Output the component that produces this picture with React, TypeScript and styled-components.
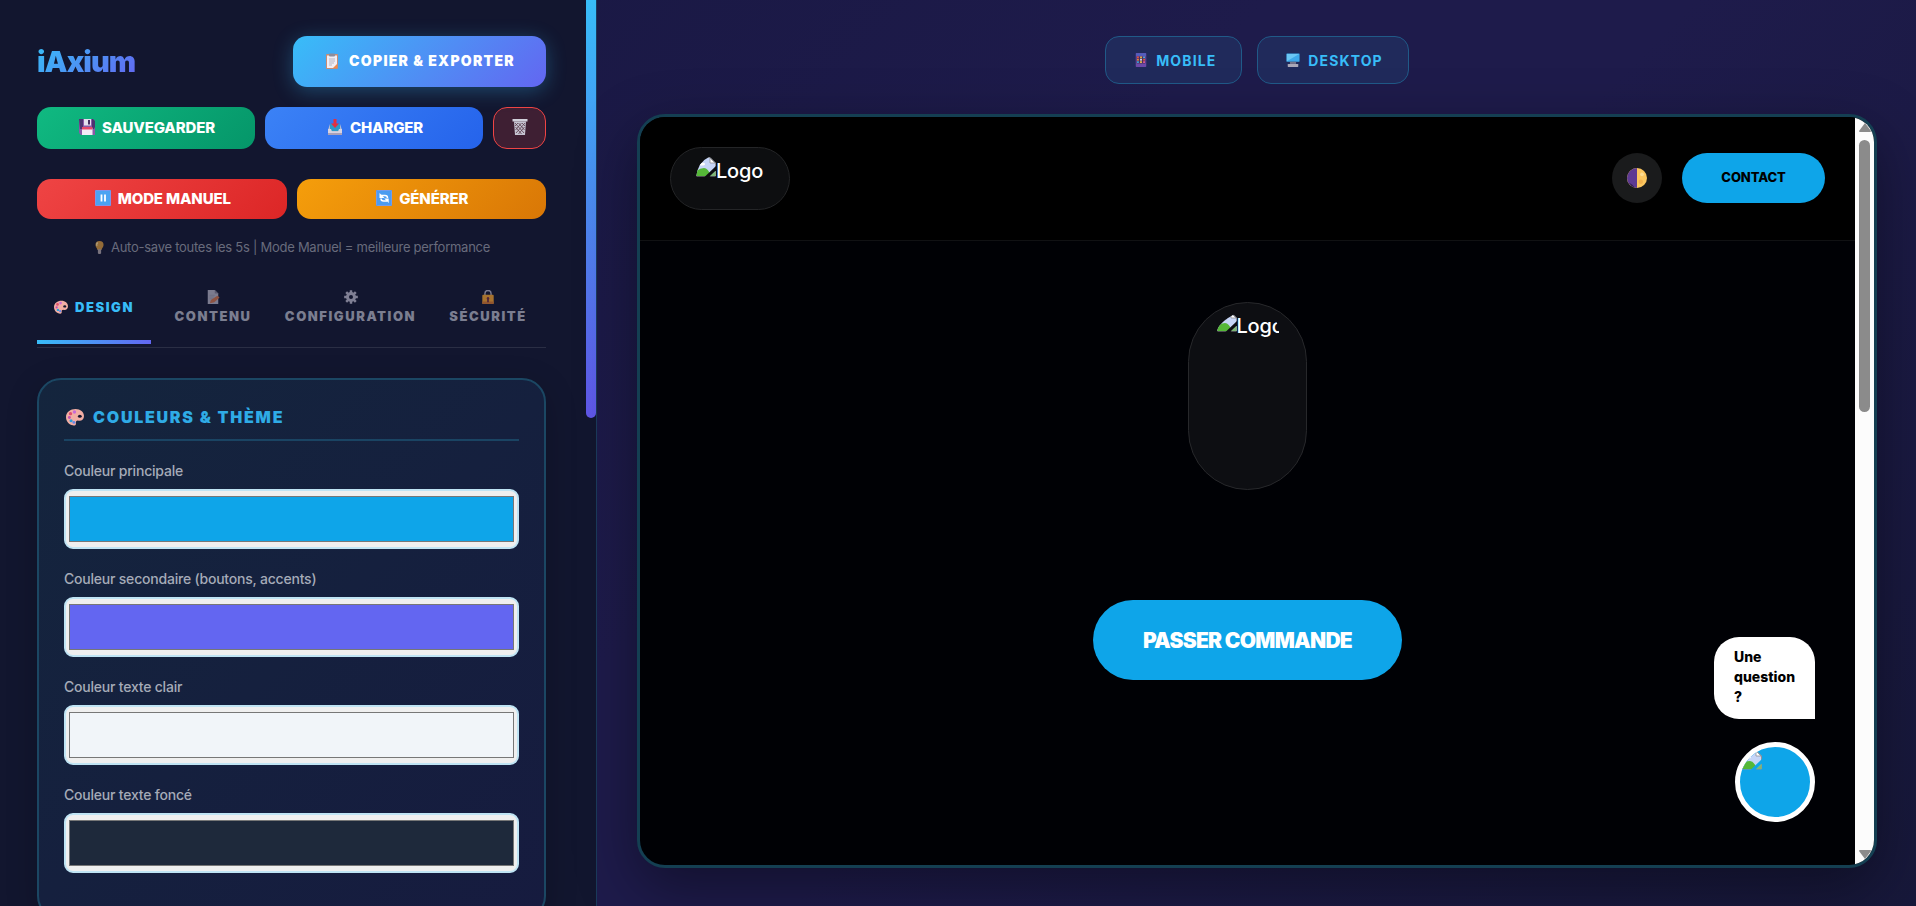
import React from 'react';
import styled, { createGlobalStyle } from 'styled-components';

const Global = createGlobalStyle`
  *, *::before, *::after { box-sizing: border-box; }
  body {
    margin: 0;
    font-family: Inter, 'Liberation Sans', sans-serif;
    color: #f1f5f9;
    background: #0f172a;
  }
  button { font-family: inherit; cursor: pointer; border: 0; }
`;

const Shell = styled.div`
  display: flex;
  height: 100vh;
  min-height: 600px;
  overflow: hidden;
  background: linear-gradient(135deg, #171740 0%, #1e1b4b 45%, #1e1b4b 60%, #17183a 100%);
`;

const Sidebar = styled.aside`
  flex: 0 0 597px;
  display: flex;
  background: #12162f;
  border-right: 1px solid #1b3a5c;
  overflow: hidden;
`;

const SidebarContent = styled.div`
  flex: 1;
  min-width: 0;
  padding: 36px 40px 40px 37px;
`;

const SideScroll = styled.div`
  flex: 0 0 10px;
`;

const SideThumb = styled.div`
  height: 418px;
  border-radius: 0 0 5px 5px;
  background: linear-gradient(180deg, #38bdf8, #6056e8);
`;

const Brand = styled.h1`
  margin: 0;
  font-size: 29px;
  font-weight: 900;
  letter-spacing: -1px;
  line-height: 36px;
  background: linear-gradient(135deg, #38bdf8, #6366f1);
  background-clip: text;
  color: transparent;
`;

const Row = styled.div<{ $mb: number; $between?: boolean }>`
  display: flex;
  align-items: center;
  justify-content: ${p => (p.$between ? 'space-between' : 'flex-start')};
  gap: 10px;
  margin-bottom: ${p => p.$mb}px;
`;

const ExportButton = styled.button`
  display: flex;
  align-items: center;
  justify-content: center;
  gap: 9px;
  width: 253px;
  height: 51px;
  padding: 0 5px 2px;
  border-radius: 14px;
  color: #fff;
  font-size: 14px;
  font-weight: 900;
  letter-spacing: 0.09em;
  background: linear-gradient(135deg, #38bdf8, #6366f1);
  box-shadow: 0 4px 20px rgba(56, 189, 248, 0.3);
`;

const ActionButton = styled.button<{ $from: string; $to: string; $h: number }>`
  flex: 1 1 0;
  display: flex;
  align-items: center;
  justify-content: center;
  gap: 7px;
  height: ${p => p.$h}px;
  padding: 0 4px 2px 6px;
  border-radius: 14px;
  color: #fff;
  font-size: 15px;
  font-weight: 800;
  letter-spacing: -0.01em;
  background: linear-gradient(135deg, ${p => p.$from}, ${p => p.$to});
`;

const TrashButton = styled.button`
  flex: 0 0 53px;
  display: flex;
  align-items: center;
  justify-content: center;
  height: 42px;
  padding: 0 0 2px;
  border: 1px solid #ef4444;
  border-radius: 14px;
  background: rgba(239, 68, 68, 0.2);
`;

const Hint = styled.p`
  display: flex;
  align-items: center;
  justify-content: center;
  gap: 5px;
  margin: 0 0 12px;
  font-size: 13px;
  letter-spacing: -0.02em;
  line-height: 20px;
  color: #686b7c;
`;

const Tabs = styled.nav`
  display: grid;
  grid-template-columns: 114fr 116fr 151fr 116fr;
  gap: 4px;
  padding-bottom: 3px;
  margin-bottom: 30px;
  border-bottom: 1px solid #2a2e44;
`;

const Tab = styled.button<{ $active?: boolean }>`
  display: flex;
  flex-direction: ${p => (p.$active ? 'row' : 'column')};
  align-items: center;
  justify-content: center;
  gap: ${p => (p.$active ? 7 : 4)}px;
  height: 75px;
  padding: 4px 0 0;
  border-bottom: 4px solid transparent;
  background: none;
  color: ${p => (p.$active ? '#38bdf8' : '#7b7e90')};
  border-image: ${p => (p.$active ? 'linear-gradient(90deg, #38bdf8, #6366f1) 1' : 'none')};
  font-size: 13px;
  font-weight: 900;
  letter-spacing: 0.12em;
  line-height: 16px;
`;

const Card = styled.section`
  padding: 25px;
  border: 2px solid #1b4763;
  border-radius: 24px;
  background: linear-gradient(135deg, #14253d, #161b3f);
  box-shadow: 0 8px 32px rgba(0, 0, 0, 0.2);
`;

const CardTitle = styled.h2`
  display: flex;
  align-items: center;
  gap: 9px;
  margin: 0 0 20px;
  padding: 0 0 10px 2px;
  border-bottom: 2px solid #1a4463;
  color: #2fabe6;
  font-size: 16px;
  font-weight: 900;
  letter-spacing: 0.11em;
  line-height: 24px;
`;

const Field = styled.div`
  display: flex;
  flex-direction: column;
  gap: 8px;
  padding-bottom: 20px;
`;

const FieldLabel = styled.label`
  color: #a5abb8;
  font-size: 14px;
  font-weight: 500;
  letter-spacing: -0.015em;
  line-height: 20px;
`;

const ColorInput = styled.input`
  width: 100%;
  height: 60px;
  padding: 1px;
  border: 2px solid #bfe4f4;
  border-radius: 9px;
  background: #efefef;
`;

const Stage = styled.main`
  flex: 1;
  min-width: 0;
  display: flex;
  flex-direction: column;
  gap: 30px;
  padding: 36px 39px 38px 40px;
`;

const DeviceBar = styled.div`
  display: flex;
  justify-content: center;
  gap: 15px;
`;

const DeviceButton = styled.button`
  display: flex;
  align-items: center;
  gap: 8px;
  height: 48px;
  padding: 0 25px 0 28px;
  border: 1px solid #205a88;
  border-radius: 14px;
  background: #202a5b;
  color: #38bdf8;
  font-size: 14px;
  font-weight: 700;
  letter-spacing: 0.08em;
`;

const Frame = styled.div`
  flex: 1;
  min-height: 0;
  display: flex;
  overflow: hidden;
  border: 3px solid #143f52;
  border-radius: 28px;
  background: #000105;
  box-shadow: 0 20px 60px rgba(0, 0, 0, 0.4);
`;

const Site = styled.div`
  position: relative;
  flex: 1;
  min-width: 0;
  display: flex;
  flex-direction: column;
`;

const SiteHeader = styled.header`
  display: flex;
  align-items: center;
  gap: 20px;
  height: 124px;
  padding: 0 30px 1px;
  border-bottom: 1px solid #101113;
  background: #000;
`;

const HeaderLogo = styled.div`
  display: flex;
  justify-content: center;
  width: 120px;
  height: 63px;
  margin-right: auto;
  padding-top: 9px;
  border: 1px solid #242527;
  border-radius: 32px;
  background: #0d0e10;
`;

const LogoImage = styled.span<{ $w: number; $r: number }>`
  display: flex;
  width: ${p => p.$w}px;
  height: 42px;
  overflow: hidden;
  border-radius: ${p => p.$r}px;
  font-size: 20px;
  font-weight: 500;
  letter-spacing: -0.01em;
  line-height: 28px;
  color: #fff;
  white-space: nowrap;
  svg { flex: none; }
`;

const ThemeToggle = styled.button`
  display: flex;
  align-items: center;
  justify-content: center;
  width: 50px;
  height: 50px;
  padding: 0;
  border-radius: 50%;
  background: #1a1b1c;
`;

const ContactButton = styled.button`
  width: 143px;
  height: 50px;
  padding: 0 0 3px;
  border-radius: 25px;
  background: #0ea5e9;
  color: #000;
  font-size: 13px;
  font-weight: 800;
  letter-spacing: -0.01em;
`;

const Hero = styled.section`
  display: flex;
  flex-direction: column;
  align-items: center;
  padding-top: 61px;
`;

const HeroLogo = styled.div`
  display: flex;
  justify-content: center;
  width: 119px;
  height: 188px;
  margin-bottom: 110px;
  padding-top: 9px;
  border: 1px solid #27282b;
  border-radius: 60px;
  background: #0d0e12;
`;

const OrderButton = styled.button`
  width: 309px;
  height: 80px;
  border-radius: 40px;
  background: #0ea5e9;
  color: #fff;
  font-size: 21px;
  font-weight: 900;
  letter-spacing: -0.035em;
`;

const ChatWidget = styled.div`
  position: absolute;
  right: 40px;
  bottom: 43px;
  display: flex;
  flex-direction: column;
  align-items: flex-end;
  gap: 23px;
`;

const ChatBubble = styled.div`
  width: 101px;
  height: 82px;
  padding: 10px 20px;
  border-radius: 25px 25px 0 25px;
  background: #fff;
  color: #000;
  font-size: 14px;
  font-weight: 800;
  line-height: 20px;
`;

const ChatButton = styled.button`
  display: flex;
  align-items: flex-start;
  width: 80px;
  height: 80px;
  padding: 3px 2px;
  overflow: hidden;
  border: 5px solid #fff;
  border-radius: 50%;
  background: #0ea5e9;
`;

const SiteScroll = styled.div`
  flex: 0 0 19px;
  display: flex;
  flex-direction: column;
  align-items: center;
  justify-content: space-between;
  padding: 6px 0;
  background: #fcfcfc;
  svg { display: block; flex: none; }
`;

const SiteThumb = styled.div`
  width: 11px;
  height: 272px;
  margin: 8px 0 auto;
  border-radius: 6px;
  background: #8b8b8b;
`;

type IconProps = { size?: number };

const Svg = ({ size = 16, dim, children }: { size?: number; dim?: number; children: React.ReactNode }) => (
  <svg width={size} height={size} viewBox="0 0 16 16" opacity={dim} aria-hidden="true">{children}</svg>
);

const Clipboard = () => (
  <Svg>
    <rect x="2" y="1" width="12" height="15" rx="1" fill="#c98b72" />
    <path d="M3 2.5h10V15H3z" fill="#f1eef5" />
    <path d="M9 15l4-4v4z" fill="#f08a4b" />
    <rect x="5" y="0.500" width="6" height="3" rx="1" fill="#8b8d9d" />
    <path d="M5 6h6M5 8h6M5 10h5M5 12h3" stroke="#a8a6b6" strokeWidth="0.8" />
  </Svg>
);

const Floppy = () => (
  <Svg>
    <path d="M0 0h14l2 2v14H2l-2-2z" fill="#8a5aa8" />
    <path d="M0 0h4v8h9V0h1l2 2v6l-1 2H1z" fill="#4b3470" />
    <rect x="5" y="0" width="7" height="6.500" fill="#e4e1ee" />
    <rect x="9" y="1" width="2" height="4.500" fill="#463063" />
    <rect x="3" y="9" width="10.500" height="7" fill="#f3ecf6" />
    <rect x="3" y="8" width="10.500" height="2.500" fill="#e5486a" />
  </Svg>
);

const Inbox = () => (
  <Svg>
    <path d="M3 5h10l2 6v5H1v-5z" fill="#b7bdd0" />
    <path d="M3 5h10v7H3z" fill="#2b9bc8" />
    <path d="M1 10h3l1 2.500h6L12 10h3v6H1z" fill="#d6d3e2" />
    <path d="M1 14h14v2H1z" fill="#a9a0b8" />
    <path d="M6.500 0h3v4.500H12L8 9 4 4.500h2.500z" fill="#e3303f" />
  </Svg>
);

const Trash = () => (
  <Svg>
    <path d="M0.500 0h15v2.500H.5z" fill="#d0cfda" />
    <path d="M2 2.500h12l-1 13.500H3z" fill="#c4c2d0" />
    <path d="M3 4l9 10M6.500 4l6 7M10 4l3 3M3.500 8l6 7M13 4L4 14M9.500 4L3.500 11M6 4L3 7M12.500 8l-6 7" stroke="#5b3b4b" strokeWidth="0.8" />
  </Svg>
);

const Pause = () => (
  <Svg>
    <rect width="16" height="16" rx="1" fill="#4ba3f2" />
    <rect x="0.500" y="0.500" width="15" height="15" rx="1" fill="none" stroke="#8d8fe8" strokeWidth="0.8" />
    <path d="M6.500 4.500v7M10 4.500v7" stroke="#fff" strokeWidth="1.800" />
  </Svg>
);

const Refresh = () => (
  <Svg>
    <rect width="16" height="16" rx="1" fill="#4b9cf0" />
    <rect x="0.500" y="0.500" width="15" height="15" rx="1" fill="none" stroke="#7f9ae8" strokeWidth="0.8" />
    <path d="M5 5.500h4a2.500 2.500 0 012.500 2.500M11 11H7.500A2.500 2.500 0 015 8.500" fill="none" stroke="#fff" strokeWidth="1.500" />
    <path d="M3.500 3v5h5L6.800 6.200 5.500 5zM12.700 13V8.500H8.200z" fill="#fff" />
  </Svg>
);

const Bulb = () => (
  <Svg size={13} dim={0.65}>
    <path d="M8 0a5 5 0 00-5 5c0 2.500 2 3.500 2.500 6h5C11 8.500 13 7.500 13 5a5 5 0 00-5-5z" fill="#d9993c" />
    <path d="M6 2a3 3 0 00-1 4" stroke="#ffe3a0" strokeWidth="1.500" fill="none" />
    <path d="M6 10h4v5l-1 1H7l-1-1z" fill="#b0a6a8" />
  </Svg>
);

const Palette = ({ size = 14 }: IconProps) => (
  <Svg size={size}>
    <path d="M8.500 0.800C4 .8 0 3.500 0 8c0 4 3 7 6 7.400 1.500.6 3 .2 2.800-1.600-.2-1.600.4-2.600 1.700-2.600 3 .8 5.500-.7 5.500-4C16 3.500 12.800.8 8.500.8z" fill="#f2aea4" />
    <ellipse cx="12.300" cy="7.300" rx="1.700" ry="1.400" fill="#12162f" />
    <circle cx="7.500" cy="3.500" r="1.500" fill="#c86ad8" />
    <circle cx="4" cy="5" r="1.500" fill="#e0506c" />
    <circle cx="3" cy="8.500" r="1.300" fill="#c44fb0" />
    <circle cx="4.500" cy="11.300" r="1.400" fill="#2f9fd8" />
    <circle cx="7" cy="12.800" r="1.300" fill="#6a8ae8" />
  </Svg>
);

const Memo = () => (
  <Svg size={14} dim={0.6}>
    <path d="M2 0h8l4 4v12H2z" fill="#c2bfd0" />
    <path d="M10 0v4h4z" fill="#8b889c" />
    <path d="M4 6h6M4 8h5M4 10h4" stroke="#a3a0b4" strokeWidth="0.8" />
    <path d="M13 6.500l2.500 2L9.500 14l-5 1 1-3.500z" fill="#e07a4e" />
  </Svg>
);

const Gear = () => (
  <Svg size={14} dim={0.75}>
    <circle cx="8" cy="8" r="4" fill="none" stroke="#a4a2b6" strokeWidth="3.400" />
    <g stroke="#a4a2b6" strokeWidth="2.800">
      <path d="M8 .2V4M8 12v3.800M.2 8H4M12 8h3.800M2.500 2.500l2.600 2.600M10.900 10.900l2.600 2.600M13.500 2.500l-2.600 2.600M5.100 10.900l-2.600 2.600" />
    </g>
  </Svg>
);

const Lock = () => (
  <Svg size={14} dim={0.7}>
    <path d="M4.500 7V4a3.500 3.500 0 017 0v3" fill="none" stroke="#aaa6b8" strokeWidth="1.600" />
    <rect x="1.500" y="5.500" width="13" height="10.500" rx="1" fill="#e69a2e" />
    <path d="M1.500 13h13v2l-1 1h-11l-1-1z" fill="#c9722f" />
    <path d="M8 8a1.600 1.600 0 011 2.800V14H7v-3.200A1.600 1.600 0 018 8z" fill="#6a2a3c" />
  </Svg>
);

const Phone = () => (
  <Svg size={14}>
    <rect x="2" y="0" width="12" height="16" rx="0.800" fill="#6c4aa8" />
    <rect x="2.500" y="0.500" width="11" height="2.500" fill="#4c62c0" />
    <rect x="3" y="4" width="10" height="8" fill="#46305f" />
    {[4, 6.7, 9.4].map((y, i) => (
      <g key={y}>
        <rect x="3.500" y={y} width="2" height="2" fill={['#ec5340', '#f28a3d', '#36a9e0'][i]} />
        <rect x="7" y={y} width="2" height="2" fill={['#f2b93d', '#e8e4f0', '#f2c84c'][i]} />
        <rect x="10.500" y={y} width="2" height="2" fill={['#47b3ec', '#ec5340', '#e85a9a'][i]} />
      </g>
    ))}
  </Svg>
);

const Monitor = () => (
  <Svg size={14}>
    <rect x="0.500" y="0.500" width="15" height="9.500" rx="0.500" fill="#3ea9ea" />
    <path d="M1 1h14L1 9.500z" fill="#6ac6f4" />
    <path d="M4.500 10h7v2.500h-7z" fill="#74748a" />
    <rect x="2" y="12.500" width="12" height="3.500" rx="0.500" fill="#aaa8b8" />
  </Svg>
);

const HalfMoon = () => (
  <Svg size={20}>
    <circle cx="8" cy="8" r="8" fill="#fbc65f" />
    <path d="M8 0a8 8 0 000 16z" fill="#5d3a93" />
    <path d="M1.500 11.500l3 2 1.500 2A8 8 0 011.500 11.500z" fill="#33204f" />
    <circle cx="12" cy="5" r="1.500" fill="#fddc92" />
    <circle cx="11" cy="11" r="1.800" fill="#f3b24e" />
  </Svg>
);

const CUTS = {
  header: 'M0 20Q2 5 13 0h7v20z',
  hero: 'M0 20V18Q4 9 18 2h2v18z',
  chat: 'M0 20V12Q4 4 12 0h8v20z',
};

const BrokenImage = ({ cut, back }: { cut: keyof typeof CUTS; back: string }) => (
  <svg width="20" height="20" viewBox="0 0 20 20" aria-hidden="true">
    <defs><clipPath id={`cut-${cut}`}><path d={CUTS[cut]} /></clipPath></defs>
    <g clipPath={`url(#cut-${cut})`}>
      <path d="M.5 0.500H14L19.500 6v13H.5z" fill="#c6d5f7" stroke="#8f9096" strokeWidth="1" />
      <path d="M14 1v5h5z" fill="#fff" stroke="#8f9096" strokeWidth="0.8" />
      <ellipse cx="6" cy="7" rx="3" ry="1.600" fill="#fff" />
      <path d="M.5 19v-5Q4 11 8 11q4 0 7 8z" fill="#55b838" />
      <path d="M8.500 20L20 9v4.500L13.500 20z" fill={back} />
      <path d="M14 19l5.500-5v5z" fill="#7eb874" />
    </g>
  </svg>
);

const FIELDS = [
  { id: 'primary', label: 'Couleur principale', value: '#0ea5e9' },
  { id: 'secondary', label: 'Couleur secondaire (boutons, accents)', value: '#6366f1' },
  { id: 'light', label: 'Couleur texte clair', value: '#f1f5f9' },
  { id: 'dark', label: 'Couleur texte foncé', value: '#1e293b' },
];

export default function App() {
  return (
    <>
      <Global />
      <Shell>
        <Sidebar>
          <SidebarContent>
            <Row $mb={20} $between>
              <Brand>iAxium</Brand>
              <ExportButton><Clipboard />COPIER &amp; EXPORTER</ExportButton>
            </Row>
            <Row $mb={30}>
              <ActionButton $h={42} $from="#10b981" $to="#059669"><Floppy />SAUVEGARDER</ActionButton>
              <ActionButton $h={42} $from="#3b82f6" $to="#2563eb"><Inbox />CHARGER</ActionButton>
              <TrashButton aria-label="Supprimer"><Trash /></TrashButton>
            </Row>
            <Row $mb={18}>
              <ActionButton $h={40} $from="#ef4444" $to="#dc2626"><Pause />MODE MANUEL</ActionButton>
              <ActionButton $h={40} $from="#f59e0b" $to="#d97706"><Refresh />GÉNÉRER</ActionButton>
            </Row>
            <Hint><Bulb />Auto-save toutes les 5s | Mode Manuel = meilleure performance</Hint>
            <Tabs>
              <Tab $active><Palette />DESIGN</Tab>
              <Tab><Memo />CONTENU</Tab>
              <Tab><Gear />CONFIGURATION</Tab>
              <Tab><Lock />SÉCURITÉ</Tab>
            </Tabs>
            <Card>
              <CardTitle><Palette size={18} />COULEURS &amp; THÈME</CardTitle>
              {FIELDS.map(f => (
                <Field key={f.id}>
                  <FieldLabel htmlFor={f.id}>{f.label}</FieldLabel>
                  <ColorInput id={f.id} type="color" defaultValue={f.value} />
                </Field>
              ))}
            </Card>
          </SidebarContent>
          <SideScroll><SideThumb /></SideScroll>
        </Sidebar>
        <Stage>
          <DeviceBar>
            <DeviceButton><Phone />MOBILE</DeviceButton>
            <DeviceButton><Monitor />DESKTOP</DeviceButton>
          </DeviceBar>
          <Frame>
            <Site>
              <SiteHeader>
                <HeaderLogo><LogoImage $w={68} $r={0}><BrokenImage cut="header" back="#0d0e10" />Logo</LogoImage></HeaderLogo>
                <ThemeToggle aria-label="Changer de thème"><HalfMoon /></ThemeToggle>
                <ContactButton>CONTACT</ContactButton>
              </SiteHeader>
              <Hero>
                <HeroLogo><LogoImage $w={62} $r={20}><BrokenImage cut="hero" back="#0d0e12" />Logo</LogoImage></HeroLogo>
                <OrderButton>PASSER COMMANDE</OrderButton>
              </Hero>
              <ChatWidget>
                <ChatBubble>Une question ?</ChatBubble>
                <ChatButton aria-label="Ouvrir le chat"><BrokenImage cut="chat" back="#0ea5e9" /></ChatButton>
              </ChatWidget>
            </Site>
            <SiteScroll>
              <svg width="14" height="9" viewBox="0 0 14 9"><path d="M7 0l6 8q0 1-1 1H2q-1 0-1-1z" fill="#8b8b8b" /></svg>
              <SiteThumb />
              <svg width="14" height="9" viewBox="0 0 14 9"><path d="M7 9l6-8q0-1-1-1H2Q1 0 1 1z" fill="#8b8b8b" /></svg>
            </SiteScroll>
          </Frame>
        </Stage>
      </Shell>
    </>
  );
}
